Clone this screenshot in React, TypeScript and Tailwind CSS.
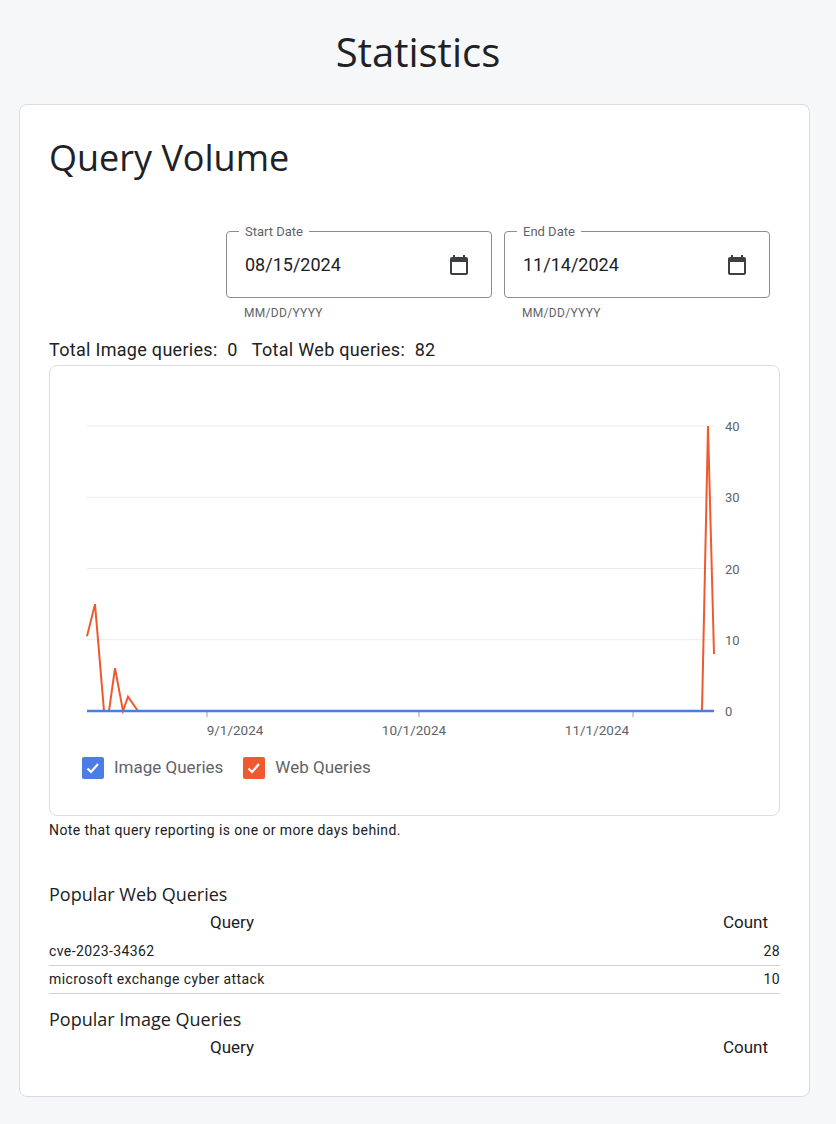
import React from 'react';

const Y0 = 345; // chart baseline, relative to chart box
const yFor = (v: number) => Y0 - v * 7.125;

const webPts: [number, number][] = [
  [37, 10.5], [45, 15], [54, 0], [59, 0], [65, 6], [73, 0], [78, 2], [88, 0], [652, 0], [658, 40], [664, 8],
];

const CalendarIcon = () => (
  <svg width="24" height="24" viewBox="0 0 24 24" fill="#3c4043">
    <path d="M19 4h-1V2h-2v2H8V2H6v2H5c-1.1 0-2 .9-2 2v14c0 1.1.9 2 2 2h14c1.1 0 2-.9 2-2V6c0-1.1-.9-2-2-2zm0 16H5V9h14v11z" />
  </svg>
);

const DateField = ({ label, value }: { label: string; value: string }) => (
  <div className="w-[266px]">
    <div className="relative h-[67px] rounded border border-[#8a8d91] flex items-center justify-between pl-[18px] pr-[20px]">
      <span className="absolute -top-[10px] left-[12px] bg-white px-[6px] text-[13px] text-[#5f6368]">{label}</span>
      <span className="text-[18px] text-[#202124]">{value}</span>
      <CalendarIcon />
    </div>
    <div className="pl-[18px] pt-[6px] text-[12px] tracking-wide text-[#5f6368]">MM/DD/YYYY</div>
  </div>
);

const Check = ({ color }: { color: string }) => (
  <svg width="22" height="22" viewBox="0 0 22 22">
    <rect width="22" height="22" rx="2" fill={color} />
    <path d="M5.5 11.5l3.5 3.5 7-8" stroke="#fff" strokeWidth="2.2" fill="none" />
  </svg>
);

const Chart = () => (
  <div className="relative h-[451px] rounded-lg border border-[#dadce0] bg-white">
    <svg width="731" height="451" className="block">
      {[0, 10, 20, 30, 40].map((v) => (
        <g key={v}>
          <line x1="37" x2="665" y1={yFor(v)} y2={yFor(v)} stroke="#ebebeb" />
          <text x="675" y={yFor(v) + 5} fontSize="13" fill="#5f6368" fontFamily="Roboto">{v}</text>
        </g>
      ))}
      {[[157, 185, '9/1/2024'], [369, 364, '10/1/2024'], [583, 547, '11/1/2024']].map(([t, l, s]) => (
        <g key={s as string}>
          <line x1={t as number} x2={t as number} y1={Y0} y2={Y0 + 6} stroke="#9aa0a6" />
          <text x={l as number} y={Y0 + 24} fontSize="13.5" fill="#5f6368" fontFamily="Roboto" textAnchor="middle">{s}</text>
        </g>
      ))}
      <polyline points={webPts.map(([x, v]) => `${x},${yFor(v)}`).join(' ')} fill="none" stroke="#ee5a2f" strokeWidth="2" />
      <line x1="37" x2="664" y1={Y0} y2={Y0} stroke="#4a7ee6" strokeWidth="2.5" />
    </svg>
    <div className="absolute left-[32px] top-[389px] flex items-center text-[17px] text-[#5f6368]">
      <Check color="#4a7ee6" />
      <span className="ml-[10px]">Image Queries</span>
      <span className="ml-[20px]"><Check color="#ee5a2f" /></span>
      <span className="ml-[10px]">Web Queries</span>
    </div>
  </div>
);

const TableHead = () => (
  <div className="flex text-[17px] text-[#202124] h-[30px] items-center">
    <div className="w-[366px] text-center">Query</div>
    <div className="flex-1 text-right pr-[12px]">Count</div>
  </div>
);

const Row = ({ q, c }: { q: string; c: number }) => (
  <div className="flex justify-between items-center h-[28px] border-b border-[#d0d3d6] text-[14px] tracking-[0.4px] text-[#202124]">
    <span>{q}</span>
    <span>{c}</span>
  </div>
);

export default function App() {
  return (
    <div className="min-h-[1124px] bg-[#f6f7f8] px-[19px] pt-[24px]" style={{ fontFamily: 'Roboto, "Liberation Sans", sans-serif' }}>
      <h1 className="text-center text-[40px] leading-[56px] text-[#202124] mb-[24px] w-[798px]" style={{ fontFamily: '"Open Sans", sans-serif' }}>Statistics</h1>
      <div className="w-[791px] h-[993px] rounded-lg border border-[#dadce0] bg-white pl-[29px] pr-[29px] pt-[28px]">
        <h2 className="text-[36px] leading-[50px] text-[#202124]" style={{ fontFamily: '"Open Sans", sans-serif' }}>Query Volume</h2>
        <div className="flex gap-[12px] ml-[177px] mt-[48px]">
          <DateField label="Start Date" value="08/15/2024" />
          <DateField label="End Date" value="11/14/2024" />
        </div>
        <div className="mt-[14px] text-[18px] tracking-[0.3px] text-[#202124] h-[24px]">
          Total Image queries:&nbsp; 0 &nbsp;&nbsp;Total Web queries:&nbsp; 82
        </div>
        <div className="mt-[5px] w-[731px]"><Chart /></div>
        <div className="mt-[4px] text-[14px] tracking-[0.4px] text-[#202124]">Note that query reporting is one or more days behind.</div>
        <h3 className="mt-[40px] text-[18px] text-[#202124]" style={{ fontFamily: '"Open Sans", sans-serif' }}>Popular Web Queries</h3>
        <TableHead />
        <Row q="cve-2023-34362" c={28} />
        <Row q="microsoft exchange cyber attack" c={10} />
        <h3 className="mt-[12px] text-[18px] text-[#202124]" style={{ fontFamily: '"Open Sans", sans-serif' }}>Popular Image Queries</h3>
        <TableHead />
      </div>
    </div>
  );
}
